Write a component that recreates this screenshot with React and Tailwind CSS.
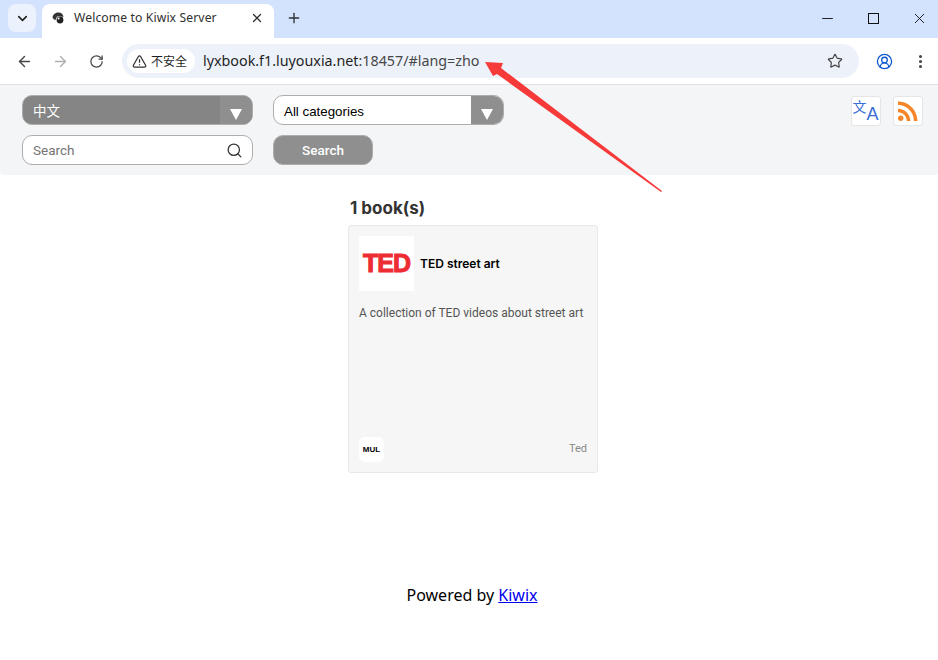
import React from 'react';
import { ArrowLeft, ArrowRight, RotateCw, Star, ChevronDown, X, Plus, Minus, CircleUserRound, EllipsisVertical, TriangleAlert, Search } from 'lucide-react';
import { MdRssFeed } from 'react-icons/md';

const roboto = { fontFamily: 'Roboto, sans-serif' };

function Favicon() {
  return (
    <svg width="12" height="12" viewBox="0 0 12 12" className="shrink-0">
      <path d="M0.5 5.5C1 2 3.5 0.5 6.5 0.5S11 2 11.5 5L8 4.2 5 4.6 3.5 8 2 7.5Z" fill="#333" />
      <circle cx="8" cy="8" r="3.4" fill="#222" />
      <circle cx="6.6" cy="6.4" r="1" fill="#fff" />
    </svg>
  );
}

function SelectBox({ label, dark }) {
  return (
    <div className={`flex items-stretch h-[30px] w-[231px] rounded-[10px] overflow-hidden border border-[#adadad] ${dark ? 'bg-[#858585] text-white' : 'bg-white text-black'}`}>
      <span className={`flex-1 flex items-center pl-[10px] ${dark ? "pt-[2px] text-[13.5px] font-['Roboto','Noto_Sans_CJK_SC',sans-serif]" : "pt-[3px] text-[13.33px] font-['Liberation_Sans',sans-serif]"}`}>{label}</span>
      <span className="w-[32px] bg-[#8f8f8f] flex items-end justify-center pb-[4px]">
        <span className="w-0 h-0 border-l-[6px] border-r-[6px] border-t-[11px] border-l-transparent border-r-transparent border-t-white" />
      </span>
    </div>
  );
}

function TopBar() {
  return (
    <>
      <div className="h-[38px] bg-[#d3e3fd] flex items-start pl-2 pt-1">
        <div className="w-[28px] h-[28px] bg-[#ebf1fd] rounded-lg flex items-center justify-center">
          <ChevronDown size={15} strokeWidth={2.5} color="#1f1f1f" />
        </div>
        <div className="ml-[6px] w-[232px] h-[34px] bg-white rounded-t-lg flex items-center pl-[10px] pr-[10px] pb-[6px]">
          <Favicon />
          <span className="ml-[10px] flex-1 text-[12.2px] text-[#303030] font-['Noto_Sans',sans-serif] tracking-[0.1px]">Welcome to Kiwix Server</span>
          <X size={14} strokeWidth={2.2} color="#303030" />
        </div>
        <Plus size={16} strokeWidth={2} color="#303030" className="ml-[12px] mt-[6px]" />
        <div className="ml-auto flex items-center h-[28px] text-[#111]">
          <Minus size={17} strokeWidth={1.3} />
          <div className="w-[11px] h-[11px] border border-[#111] ml-[32px]" />
          <X size={17} strokeWidth={1.3} className="ml-[32px] mr-[10px]" />
        </div>
      </div>
      <div className="h-[47px] bg-white border-b border-[#dfe1e5] flex items-center">
        <ArrowLeft size={17} color="#474747" strokeWidth={2} className="ml-4" />
        <ArrowRight size={17} color="#b0b0b0" strokeWidth={2} className="ml-[19px]" />
        <RotateCw size={15} color="#474747" strokeWidth={2} className="ml-[20px]" />
        <div className="ml-[18px] w-[737px] h-[34px] rounded-full bg-[#edf2fa] flex items-center pl-[5px] pr-[16px]">
          <div className="w-[68px] h-[24px] rounded-full bg-white flex items-center pl-[5px] gap-[4px]">
            <TriangleAlert size={15} color="#303030" strokeWidth={2} />
            <span className="text-[12px] text-[#1f1f1f] font-['Noto_Sans_CJK_SC',sans-serif]">不安全</span>
          </div>
          <span className="ml-2 text-[14.3px] text-[#1f1f1f] font-['Noto_Sans',sans-serif]">
            lyxbook.f1.luyouxia.net<span className="text-[#474747]">:18457/#lang=zho</span>
          </span>
          <Star size={16} color="#474747" strokeWidth={1.8} className="ml-auto" />
        </div>
        <CircleUserRound size={17} color="#0b57d0" strokeWidth={1.8} className="ml-[17px]" />
        <EllipsisVertical size={17} color="#474747" strokeWidth={2.4} className="ml-[19px]" />
      </div>
    </>
  );
}

function FilterBar() {
  return (
    <div className="h-[90px] bg-[#f4f5f7] rounded-b-[4px] flex pl-[22px] pr-[15px] pt-[10px]">
      <div className="flex flex-col gap-[10px]">
        <SelectBox label="中文" dark />
        <div className="h-[30px] w-[231px] rounded-[10px] border border-[#adadad] bg-white flex items-center pl-[10px] pr-[9px]">
          <span className="flex-1 text-[13.5px] text-[#757575]" style={roboto}>Search</span>
          <Search size={17} color="#333" strokeWidth={1.8} />
        </div>
      </div>
      <div className="flex flex-col gap-[10px] ml-[20px]">
        <SelectBox label="All categories" />
        <div className="h-[30px] w-[100px] rounded-[10px] border border-[#adadad] bg-[#8f8f8f] text-white flex items-center justify-center text-[13.5px] font-medium" style={roboto}>Search</div>
      </div>
      <div className="ml-auto flex gap-[12px] mt-[1px]">
        <div className="w-[30px] h-[30px] bg-white border border-[#e5e5e5] rounded-[3px] text-[#3a6fd8] flex justify-center pl-[1px] pr-[2px] py-[3px] font-['Liberation_Sans','Noto_Sans_CJK_SC',sans-serif]">
          <span className="self-start text-[14px] leading-[14px]">文</span>
          <span className="self-end text-[18px] leading-[15px] font-medium">A</span>
        </div>
        <div className="w-[30px] h-[30px] bg-white border border-[#e5e5e5] rounded-[3px] flex items-center justify-center">
          <MdRssFeed size={30} color="#f7862a" className="shrink-0" />
        </div>
      </div>
    </div>
  );
}

function BookCard() {
  return (
    <div className="w-[250px] h-[248px] bg-[#f6f6f6] border border-[#e8e8e8] rounded-[3px] p-[10px] flex flex-col">
      <div className="flex items-center gap-[6px]">
        <div className="w-[55px] h-[55px] bg-white flex items-center justify-center">
          <span className="text-[#ee2c33] text-[25px] font-black tracking-[-1px] font-['Liberation_Sans',sans-serif]" style={{ WebkitTextStroke: '1px #ee2c33' }}>TED</span>
        </div>
        <span className="text-[12px] font-semibold text-black font-['Inter',sans-serif]">TED street art</span>
      </div>
      <p className="mt-[14px] text-[12px] leading-[16px] text-[#555]" style={roboto}>A collection of TED videos about street art</p>
      <div className="mt-auto flex items-center justify-between">
        <div className="w-[25px] h-[25px] bg-white rounded-md flex items-center justify-center text-[8px] font-bold text-black font-['Liberation_Sans',sans-serif]">MUL</div>
        <span className="text-[11px] text-[#888]" style={roboto}>Ted</span>
      </div>
    </div>
  );
}

export default function App() {
  return (
    <div className="relative w-[938px] h-[660px] overflow-hidden bg-white">
      <TopBar />
      <FilterBar />
      <main className="pl-2 flex flex-col items-center">
        <div className="w-[250px]">
          <h2 className="mt-[21px] mb-[5px] pl-[2px] text-[17px] leading-6 font-bold text-[#333] font-['Inter',sans-serif]">1 book(s)</h2>
          <BookCard />
        </div>
        <p className="mt-[111px] mr-[2px] text-[16px] leading-[22px] text-black font-['Noto_Sans',sans-serif]">
          Powered by <a href="#" className="text-[#0000ee] underline">Kiwix</a>
        </p>
      </main>
      {/* red annotation arrow drawn over the screenshot */}
      <svg className="absolute left-0 top-0 pointer-events-none" width="938" height="660">
        <polygon points="485,62 503,63 501,68 662,191 661,192 497,74 493,76" fill="#f63a3a" />
      </svg>
    </div>
  );
}
